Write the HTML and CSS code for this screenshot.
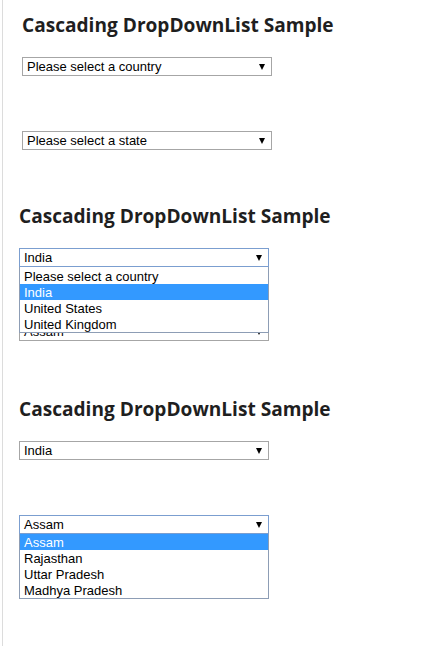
FILE: index.html
```html
<!DOCTYPE html>
<html>
<head>
<meta charset="utf-8">
<link rel="stylesheet" href="styles.css">
</head>
<body>
<div class="page">
  <section class="panel panel-first">
    <h2 class="title">Cascading DropDownList Sample</h2>
    <div class="select"><span class="value">Please select a country</span><span class="arrow"></span></div>
    <div class="select second"><span class="value">Please select a state</span><span class="arrow"></span></div>
  </section>

  <section class="panel">
    <h2 class="title">Cascading DropDownList Sample</h2>
    <div class="field">
      <div class="select focused"><span class="value">India</span><span class="arrow"></span></div>
      <ul class="list list-low">
        <li>Please select a country</li>
        <li class="active">India</li>
        <li>United States</li>
        <li>United Kingdom</li>
      </ul>
    </div>
    <div class="select second"><span class="value">Assam</span><span class="arrow"></span></div>
  </section>

  <section class="panel">
    <h2 class="title">Cascading DropDownList Sample</h2>
    <div class="select"><span class="value">India</span><span class="arrow"></span></div>
    <div class="field second">
      <div class="select focused"><span class="value">Assam</span><span class="arrow"></span></div>
      <ul class="list">
        <li class="active">Assam</li>
        <li>Rajasthan</li>
        <li>Uttar Pradesh</li>
        <li>Madhya Pradesh</li>
      </ul>
    </div>
  </section>
</div>
</body>
</html>
```

FILE: styles.css
```css
html, body {
  margin: 0;
  padding: 0;
  background: #ffffff;
}

.page {
  margin-left: 2px;
  border-left: 1px solid #dcdcdc;
  min-height: 646px;
  box-sizing: border-box;
}

.panel {
  padding: 10px 0 0 16px;
  height: 193px;
  box-sizing: border-box;
}

.panel-first {
  padding-left: 19px;
  padding-top: 11px;
  height: 192px;
}

.title {
  margin: 0 0 18px 0;
  font-family: "Open Sans", "DejaVu Sans", sans-serif;
  font-weight: 700;
  font-size: 19.1px;
  line-height: 28px;
  color: #1f1f1f;
  letter-spacing: 0;
  white-space: nowrap;
}

.field {
  position: relative;
  width: 250px;
}

.select {
  width: 250px;
  height: 19px;
  box-sizing: border-box;
  border: 1px solid #a6a6a6;
  display: flex;
  align-items: center;
  justify-content: space-between;
  padding: 0 6px 0 4px;
  font-family: "Liberation Sans", Arial, sans-serif;
  font-size: 13px;
  color: #000;
  background: #fff;
}

.select.focused {
  border-color: #7b9ed0;
}

.second {
  margin-top: 55px;
}

.value {
  line-height: 17px;
  white-space: nowrap;
}

.arrow {
  width: 0;
  height: 0;
  border-left: 3.5px solid transparent;
  border-right: 3.5px solid transparent;
  border-top: 6px solid #000;
  margin-top: 1px;
}

.list {
  position: absolute;
  left: 0;
  top: 19px;
  width: 250px;
  box-sizing: border-box;
  margin: 0;
  padding: 0;
  list-style: none;
  border: 1px solid #8d9db5;
  border-top: none;
  background: #fff;
  font-family: "Liberation Sans", Arial, sans-serif;
  font-size: 13px;
  color: #000;
  z-index: 2;
}

.list-low {
  padding-top: 1px;
}

.list li {
  height: 16px;
  line-height: 17px;
  padding-left: 4px;
  white-space: nowrap;
}

.list li.active {
  background: #3399ff;
  color: #fff;
}
```
